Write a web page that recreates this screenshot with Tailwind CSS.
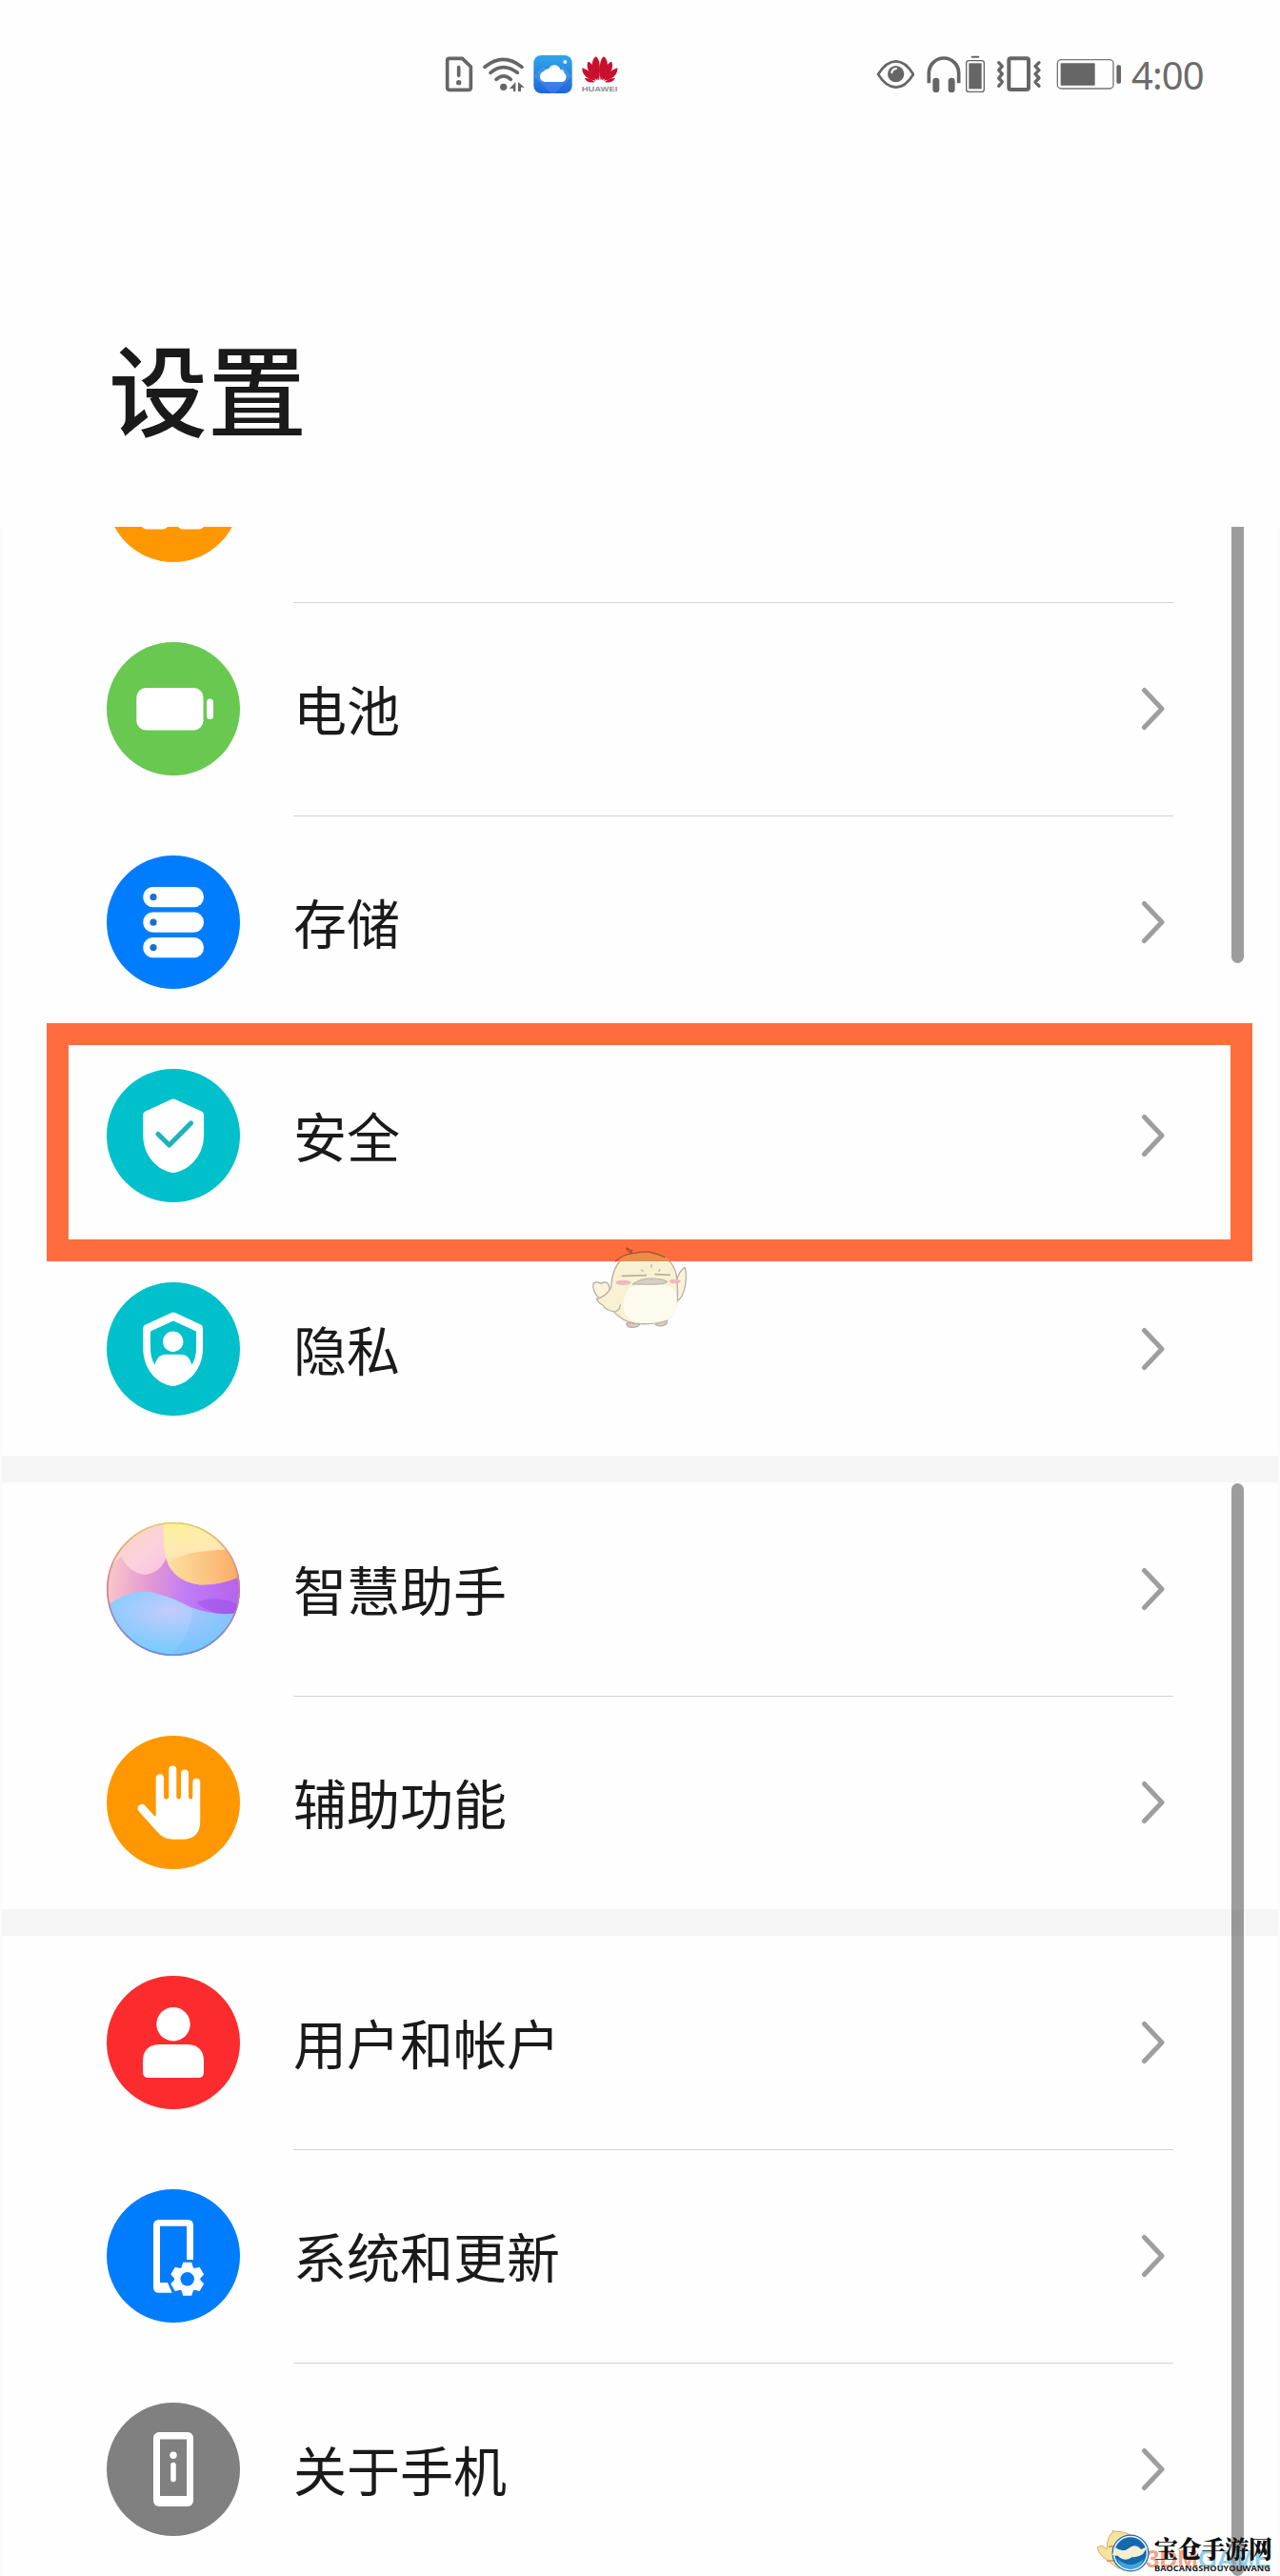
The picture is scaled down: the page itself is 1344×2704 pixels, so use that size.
<!DOCTYPE html>
<html lang="zh-CN">
  <head>
    <meta charset="UTF-8" />
    <meta name="viewport" content="width=device-width, initial-scale=1.0" />
    <title>设置</title>
    <script src="https://cdn.jsdelivr.net/npm/@tailwindcss/browser@4"></script>
  </head>
  <body class="bg-[#fefefe] font-['Noto_Sans_CJK_SC',sans-serif] text-[#1a1a1a]">
    <svg class="hidden">
      <symbol id="chevron" viewBox="0 0 26 46">
        <path d="M3.5 3.5 22 23 3.5 42.5" fill="none" stroke="#9e9e9e" stroke-width="5" stroke-linecap="round" stroke-linejoin="round" />
      </symbol>
    </svg>

    <div class="relative w-[1344px] h-[2704px] overflow-hidden">
      <!-- Header -->
      <header class="h-[553px]">
        <!-- Status bar -->
        <div class="flex items-center h-[156px] pl-[467px]">
          <svg class="w-[30px] h-10" viewBox="51 54 90 120">
            <path d="M66 64h40l27 26v66q0 7-7 7H66q-7 0-7-7V71q0-7 7-7Z" fill="none" stroke="#666" stroke-width="11" />
            <path d="M95 92v26" stroke="#666" stroke-width="11" stroke-linecap="round" />
            <circle cx="95" cy="140" r="8" fill="#666" />
          </svg>
          <svg class="w-11 h-10 ml-2.5" viewBox="171 54 132 120">
            <g fill="none" stroke="#666" stroke-width="11" stroke-linecap="round">
              <path d="M177 91Q235 43 294 91" />
              <path d="M195 109Q235 75 280 109" />
              <path d="M213 130Q237 109 259 130" />
            </g>
            <circle cx="236" cy="154" r="11" fill="#666" />
            <path d="M274 138v30h-7v-9h-12ZM282 138l20 17h-11v13h-9Z" fill="#666" />
          </svg>
          <svg class="w-[41px] h-10 ml-[9px]" viewBox="329 54 123 120">
            <defs>
              <linearGradient id="cloudBg" x1="0" y1="0" x2="0" y2="1">
                <stop offset="0" stop-color="#2fa6ea" />
                <stop offset="1" stop-color="#1f66dd" />
              </linearGradient>
            </defs>
            <rect x="330" y="54" width="121" height="120" rx="24" fill="url(#cloudBg)" />
            <path d="m331 120 30-30 30 30-30 30ZM391 120l30-30 30 30-30 30ZM361 150l30-26 30 26-24 24h-12Z" fill="#fff" opacity=".1" />
            <circle cx="429" cy="75" r="6" fill="#e4f6ff" />
            <path d="M364 138a17 17 0 0 1-2-33 15 15 0 0 1 15-8c8-16 31-17 37 2 10 0 11 5 11 10 12 6 9 28-5 29Z" fill="#fff" />
            <path d="M413 102q8-3 12 7" fill="none" stroke="#cfe9fb" stroke-width="4" />
          </svg>
          <svg class="w-10 h-10 ml-[9px]" viewBox="482 54 120 120">
            <g fill="#c8102e">
              <path d="M539 133C516 108 509 72 529 58c13 7 16 40 10 75Z" />
              <path d="M544 133C567 108 574 72 554 58c-13 7-16 40-10 75Z" />
              <path d="M535 133C515 124 495 97 504 74c17 4 28 33 31 59Z" />
              <path d="M548 133C568 124 588 97 579 74c-17 4-28 33-31 59Z" />
              <path d="M529 134C507 133 484 117 486 94c21 6 34 22 43 40Z" />
              <path d="M554 134c22-1 45-17 43-40-21 6-34 22-43 40Z" />
              <path d="M526 138c-12 4-27 1-33-12 13 0 25 5 33 12ZM557 138c12 4 27 1 33-12-13 0-25 5-33 12Z" />
            </g>
            <text x="484" y="168" textLength="113" lengthAdjust="spacingAndGlyphs" font-family="Liberation Sans" font-size="24" font-weight="700" fill="#8f8f8f">HUAWEI</text>
          </svg>

          <svg class="w-10 h-10 ml-[270px]" viewBox="60 54 120 120">
            <path d="M66 114Q92 73 122 73t55 41Q152 155 122 155T66 114Z" fill="none" stroke="#666" stroke-width="8" stroke-linejoin="round" />
            <circle cx="122" cy="113" r="26" fill="#666" />
            <path d="M109 109q1-11 14-13" fill="none" stroke="#fff" stroke-width="6" stroke-linecap="round" />
          </svg>
          <svg class="w-9 h-10 ml-[13px]" viewBox="218 54 108 120">
            <path d="M225 142v-32a46 46 0 0 1 94 0v32" fill="none" stroke="#666" stroke-width="11" />
            <rect x="237" y="125" width="21" height="46" rx="10" fill="#666" />
            <rect x="286" y="125" width="21" height="46" rx="10" fill="#666" />
          </svg>
          <svg class="w-5 h-10 ml-[5px]" viewBox="342 54 60 120">
            <path d="M362 59h20" stroke="#666" stroke-width="6" stroke-linecap="round" />
            <rect x="344" y="71" width="56" height="98" rx="8" fill="none" stroke="#666" stroke-width="4" />
            <rect x="352" y="79" width="40" height="81" fill="#666" />
          </svg>
          <svg class="w-12 h-10 ml-3" viewBox="438 54 144 120">
            <g fill="none" stroke="#666" stroke-width="10" stroke-linecap="round" stroke-linejoin="round">
              <rect x="478" y="64" width="62" height="98" rx="6" stroke-width="12" />
              <path d="m446 77 11 12-11 12 11 12-11 13 11 12-11 13M573 77l-12 12 12 12-12 12 12 13-12 12 12 13" />
            </g>
          </svg>
          <svg class="w-[68px] h-10 ml-[15px]" viewBox="627 54 204 120">
            <rect x="631" y="68" width="176" height="91" rx="12" fill="none" stroke="#777" stroke-width="4" />
            <rect x="641" y="79" width="108" height="70" rx="3" fill="#666" />
            <rect x="817" y="85" width="14" height="58" rx="5" fill="#666" />
          </svg>
          <span class="ml-[11px] mt-0.5 font-['Noto_Sans'] text-[40px] leading-none tracking-[-0.9px] text-[#6b6b6b]">4:00</span>
        </div>

        <h1 class="mt-[172px] ml-[114px] text-[104px] leading-[156px] font-medium">设置</h1>
      </header>

      <!-- Settings list -->
      <main class="border-x-2 border-[#fbfbfb]">
        <section>
          <div class="h-[79px] overflow-hidden flex items-end pl-[110px]">
            <svg class="size-[140px] mb-[42px]" viewBox="0 0 140 140">
              <circle cx="70" cy="70" r="70" fill="#ff9800" />
              <rect x="36" y="76" width="29" height="29.5" rx="6" fill="#fff" />
              <rect x="74" y="76" width="29" height="29.5" rx="6" fill="#fff" />
            </svg>
          </div>

          <div class="h-56 flex items-center px-[110px]">
            <svg class="size-[140px] shrink-0" viewBox="0 0 140 140">
              <circle cx="70" cy="70" r="70" fill="#68c850" />
              <rect x="31.3" y="48" width="70.2" height="44.5" rx="10" fill="#fff" />
              <rect x="105" y="59.5" width="7" height="21.5" rx="3.5" fill="#fff" />
            </svg>
            <div class="flex-1 h-full ml-14 border-t border-[#d2d2d2] flex items-center justify-between">
              <span class="-mt-[3px] text-[56px]">电池</span>
              <svg class="w-[26px] h-[46px] mr-2 -mt-px"><use href="#chevron" /></svg>
            </div>
          </div>

          <div class="h-56 flex items-center px-[110px]">
            <svg class="size-[140px] shrink-0" viewBox="0 0 140 140">
              <circle cx="70" cy="70" r="70" fill="#007dff" />
              <g fill="#fff">
                <rect x="38.3" y="33" width="63.7" height="21.3" rx="10.6" />
                <rect x="38.3" y="59.5" width="63.7" height="21.3" rx="10.6" />
                <rect x="38.3" y="86" width="63.7" height="21.3" rx="10.6" />
              </g>
              <g fill="#1a6fd0">
                <circle cx="49" cy="43.7" r="3.6" />
                <circle cx="49" cy="70.2" r="3.6" />
                <circle cx="49" cy="96.6" r="3.6" />
              </g>
            </svg>
            <div class="flex-1 h-full ml-14 border-t border-[#d2d2d2] flex items-center justify-between">
              <span class="-mt-[3px] text-[56px]">存储</span>
              <svg class="w-[26px] h-[46px] mr-2 -mt-px"><use href="#chevron" /></svg>
            </div>
          </div>

          <div class="h-56 flex items-center px-[110px]">
            <svg class="size-[140px] shrink-0" viewBox="0 0 140 140">
              <circle cx="70" cy="70" r="70" fill="#00c0cb" />
              <path d="M68.5 31.8q1.5-.7 3 0L100 44.8q2 1 2 3.2v22c0 19-13 35-29 38.5q-3 1-6 0C51 105 38.3 89 38.3 70V48q0-2.200 2-3.200Z" fill="#fff" />
              <path d="m54 68.500 11.700 11.500L88.500 57" fill="none" stroke="#1fb2bb" stroke-width="5.200" stroke-linecap="round" stroke-linejoin="round" />
            </svg>
            <div class="flex-1 h-full ml-14 flex items-center justify-between">
              <span class="-mt-0.5 text-[56px]">安全</span>
              <svg class="w-[26px] h-[46px] mr-2"><use href="#chevron" /></svg>
            </div>
          </div>

          <div class="h-56 flex items-center px-[110px]">
            <svg class="size-[140px] shrink-0" viewBox="0 0 140 140">
              <circle cx="70" cy="70" r="70" fill="#00c0cb" />
              <path d="M68.5 31.8q1.5-.7 3 0L99.5 44.8q1.5 1 1.5 3.2v22c0 19-12.500 35-28.500 38.500q-3 1-6 0C50.500 105 38.300 89 38.300 70V48q0-2.200 2-3.200Z" fill="#fff" />
              <path d="M70 40.500 94 51.500V70q0 9-4.500 16.500C87 79 84 75.700 78 75.700H62c-6 0-9 3.300-11.500 10.800Q46 79 46 70V51.500Z" fill="#00c0cb" />
              <circle cx="69.700" cy="62.300" r="10.700" fill="#fff" />
            </svg>
            <div class="flex-1 h-full ml-14 flex items-center justify-between">
              <span class="-mt-0.5 text-[56px]">隐私</span>
              <svg class="w-[26px] h-[46px] mr-2"><use href="#chevron" /></svg>
            </div>
          </div>
        </section>

        <section class="border-t-28 border-[#f6f6f6]">
          <div class="h-56 flex items-center px-[110px]">
            <svg class="size-[140px] shrink-0" viewBox="0 0 140 140">
              <defs>
                <clipPath id="orb"><circle cx="70" cy="70" r="70" /></clipPath>
                <linearGradient id="orbMid" x1="0" y1="0" x2="1" y2=".1">
                  <stop offset="0" stop-color="#fbd0c8" />
                  <stop offset=".35" stop-color="#e69ad0" />
                  <stop offset=".65" stop-color="#c07bf8" />
                  <stop offset="1" stop-color="#b765ee" />
                </linearGradient>
                <linearGradient id="orbPink" x1="0" y1="0" x2="1" y2="1">
                  <stop offset="0" stop-color="#fcd3b8" />
                  <stop offset=".6" stop-color="#fbd3dc" />
                  <stop offset="1" stop-color="#f8c0e0" />
                </linearGradient>
                <linearGradient id="orbYellow" x1="0" y1="0" x2=".2" y2="1">
                  <stop offset="0" stop-color="#fdf19a" />
                  <stop offset=".5" stop-color="#fee9b4" />
                  <stop offset="1" stop-color="#fcc090" />
                </linearGradient>
                <linearGradient id="orbOrange" x1="0" y1="0" x2="1" y2="0">
                  <stop offset="0" stop-color="#fee0a0" />
                  <stop offset="1" stop-color="#fbab66" />
                </linearGradient>
                <radialGradient id="orbBlue" cx=".48" cy=".3" r=".6">
                  <stop offset="0" stop-color="#c3ccfc" />
                  <stop offset="1" stop-color="#7ccbff" />
                </radialGradient>
                <linearGradient id="orbRim" x1="0" y1="0" x2="0" y2="1">
                  <stop offset="0" stop-color="#e3cc62" />
                  <stop offset=".5" stop-color="#d07a98" />
                  <stop offset="1" stop-color="#6d8ade" />
                </linearGradient>
              </defs>
              <g clip-path="url(#orb)">
                <rect width="140" height="140" fill="url(#orbMid)" />
                <path d="M0 0h64v30q-3 22-24 25-16-2-25-19L0 50Z" fill="url(#orbPink)" />
                <path d="M60 0h80v56q-18 10-42 9.500Q63 62 60 25Z" fill="url(#orbYellow)" />
                <path d="M64 43q22-16 76-14v28q-20 9-42 8.500Q75 62 64 43Z" fill="url(#orbOrange)" />
                <path d="M94 84q22-9 46 3v10q-28 2-46-13Z" fill="#9550ea" opacity=".55" />
                <path d="M0 88q25-20 50-14 20 5 38 15 26 10 52 6v45H0Z" fill="url(#orbBlue)" />
                <path d="M90 90q-2 32-24 50h74V95q-28 5-50-5Z" fill="#6aaefb" opacity=".2" />
              </g>
              <circle cx="70" cy="70" r="69.200" fill="none" stroke="url(#orbRim)" stroke-width="1.600" />
            </svg>
            <div class="flex-1 h-full ml-14 flex items-center justify-between">
              <span class="-mt-0.5 text-[56px]">智慧助手</span>
              <svg class="w-[26px] h-[46px] mr-2"><use href="#chevron" /></svg>
            </div>
          </div>

          <div class="h-56 flex items-center px-[110px]">
            <svg class="size-[140px] shrink-0" viewBox="0 0 140 140">
              <circle cx="70" cy="70" r="70" fill="#ff9800" />
              <path d="M51.700 84V44.500a4.150 4.150 0 0 1 8.300 0V64q0 2.500 2.650 2.500T65.300 64V35.500a4 4 0 0 1 8 0V64q0 2.500 2.350 2.500T78 64V39.500a4 4 0 0 1 8 0V64q0 2.500 2.200 2.500T90.300 64V48a4 4 0 0 1 7.900 0V90q0 18.700-19 18.700H70q-10.500 0-17-8L33.500 79a4.500 4.500 0 0 1 6-6.500L49.500 83.500Q51.500 85.500 51.700 84Z" fill="#fff" />
            </svg>
            <div class="flex-1 h-full ml-14 border-t border-[#d2d2d2] flex items-center justify-between">
              <span class="-mt-[3px] text-[56px]">辅助功能</span>
              <svg class="w-[26px] h-[46px] mr-2 -mt-px"><use href="#chevron" /></svg>
            </div>
          </div>
        </section>

        <section class="border-t-28 border-[#f6f6f6]">
          <div class="h-56 flex items-center px-[110px]">
            <svg class="size-[140px] shrink-0" viewBox="0 0 140 140">
              <circle cx="70" cy="70" r="70" fill="#fc2c2e" />
              <circle cx="70" cy="50.700" r="17.700" fill="#fff" />
              <path d="M54.500 72h31Q102 73 102 90v11q0 6-6 6H44q-6 0-6-6V90Q38 73 54.500 72Z" fill="#fff" />
            </svg>
            <div class="flex-1 h-full ml-14 flex items-center justify-between">
              <span class="-mt-0.5 text-[56px]">用户和帐户</span>
              <svg class="w-[26px] h-[46px] mr-2"><use href="#chevron" /></svg>
            </div>
          </div>

          <div class="h-56 flex items-center px-[110px]">
            <svg class="size-[140px] shrink-0" viewBox="0 0 140 140">
              <circle cx="70" cy="70" r="70" fill="#007dff" />
              <path d="M91 74V38q0-6-6-6H55q-6 0-6 6v64.700q0 6 6 6h13.700L64 98h-8V38.700h28V74Z" fill="#fff" />
              <g transform="translate(84.700 94.300)">
                <g fill="#fff">
                  <circle r="13.500" />
                  <path id="tooth" d="M-6.500-11-4.500-17.500h9l2 6.500Z" />
                  <use href="#tooth" transform="rotate(60)" />
                  <use href="#tooth" transform="rotate(120)" />
                  <use href="#tooth" transform="rotate(180)" />
                  <use href="#tooth" transform="rotate(240)" />
                  <use href="#tooth" transform="rotate(300)" />
                </g>
                <circle r="7.200" fill="#007dff" />
              </g>
            </svg>
            <div class="flex-1 h-full ml-14 border-t border-[#d2d2d2] flex items-center justify-between">
              <span class="-mt-[3px] text-[56px]">系统和更新</span>
              <svg class="w-[26px] h-[46px] mr-2 -mt-px"><use href="#chevron" /></svg>
            </div>
          </div>

          <div class="h-56 flex items-center px-[110px]">
            <svg class="size-[140px] shrink-0" viewBox="0 0 140 140">
              <circle cx="70" cy="70" r="70" fill="#808080" />
              <rect x="49" y="31" width="42" height="78" rx="6" fill="#fff" />
              <rect x="56" y="38.500" width="28" height="59.500" fill="#808080" />
              <circle cx="70" cy="55.300" r="3.700" fill="#fff" />
              <path d="M70 65.500v15" stroke="#fff" stroke-width="5.600" stroke-linecap="round" />
            </svg>
            <div class="flex-1 h-full ml-14 border-t border-[#d2d2d2] flex items-center justify-between">
              <span class="-mt-[3px] text-[56px]">关于手机</span>
              <svg class="w-[26px] h-[46px] mr-2 -mt-px"><use href="#chevron" /></svg>
            </div>
          </div>
        </section>
      </main>

      <!-- Scrollbars -->
      <div class="absolute left-[1293px] top-[553px] w-[13px] h-[458px] rounded-b-full bg-black/38"></div>
      <div class="absolute left-[1293px] top-[1557px] w-[13px] h-[1147px] rounded-full bg-black/38"></div>

      <!-- Highlight frame -->
      <div class="absolute left-[49px] top-[1074px] w-[1266px] h-[250px] border-23 border-[#ff6d3f]"></div>

      <!-- Mascot -->
      <svg class="absolute left-[600px] top-[1280px] w-[140px] h-[130px]" viewBox="0 0 420 390">
        <g stroke="#b8b0a8" stroke-width="4" stroke-linejoin="round" stroke-linecap="round">
          <path d="M174 326q-4 14 20 14 22-2 20-12ZM264 330q8 8 26 4 14-4 11-18Z" fill="#d8cec0" />
          <path d="M331 196q6-32 26-45 8 20 1 60-8 36-24 45Z" fill="#faf5da" />
          <path d="M88 250q-24-28-19-48 10-8 24 0 14-8 22 0 8 14 6 30Z" fill="#faf5da" />
          <path d="M194 108q50-14 102 14 36 22 37 78 8 80-24 110-38 24-106 18-40-4-70-38-26-4-34-20-14-6-20-20 30-6 46-36 4-90 69-106Z" fill="#f8f2d2" />
        </g>
        <path d="M146 132q16-20 48-25 50-14 102 14l15 11Z" fill="#ee8a48" />
        <path d="M139 132q22-22 55-25 50-14 100 12M194 107q-18-4-22-18 8 10 20 8M194 107l-16-16" fill="none" stroke="#b4522c" stroke-width="4" stroke-linecap="round" />
        <path d="M186 212q60-18 130 0 18 20 17 54-2 30-26 48-50 20-112 8-32-18-32-54 2-34 23-56Z" fill="#fdfbee" />
        <g fill="none" stroke="#b8b0a8" stroke-width="5" stroke-linecap="round">
          <path d="m160 178 75-2M264 173l46 2" />
          <path d="m221 159 4 5M252 143v8M279 158l-4 5M154 270q-2 16-16 20" stroke-width="4" />
        </g>
        <path d="M192 204q24-18 60-18t50 10q-4 8-48 9Z" fill="#d8cec2" stroke="#b8b0a8" stroke-width="3" />
        <ellipse cx="163" cy="199" rx="24" ry="8" fill="#efb9bd" />
        <ellipse cx="326" cy="195" rx="18" ry="7" fill="#efb9bd" />
      </svg>

      <!-- Site watermark -->
      <div class="absolute left-[1150px] top-[2650px] w-[194px] h-[54px]">
        <svg class="size-full" viewBox="0 0 194 54">
          <path d="M19 8q-2-3 1-1 16 0 24 10L38 44l-14 2-12-9q-7-4-10-13 6-4 10 2Q13 10 19 8Z" fill="#f7e2a0" stroke="#d6ae62" />
          <path d="M14 23h10M12 38h8" stroke="#e59a72" stroke-width="2" />
          <text x="53" y="45" textLength="55" lengthAdjust="spacingAndGlyphs" font-family="Liberation Sans" font-size="25" font-weight="700" fill="#f0a58a">3DM</text>
          <text x="108" y="45" textLength="76" lengthAdjust="spacingAndGlyphs" font-family="Liberation Sans" font-size="25" font-weight="700" fill="#93cfe4">GAME</text>
          <circle cx="37" cy="30" r="19.500" fill="#1568ae" />
          <circle cx="37" cy="30" r="17.500" fill="none" stroke="#e7f3fa" stroke-width="1.500" />
          <path d="M21 24q8 6 14 1 7-6 13 1l7-3-5 8q-6 4-11 3-8 6-15-1l-6-1Z" fill="#f3efd0" />
          <path d="M23 36q14 12 28 0-4 11-14 11T23 36Z" fill="#42a6dc" />
          <text x="62" y="35" textLength="124" font-family="Noto Serif CJK SC, Noto Sans CJK SC" font-size="25" font-weight="900" fill="#111">宝仓手游网</text>
          <text x="62" y="48.500" textLength="122" lengthAdjust="spacingAndGlyphs" font-family="Open Sans" font-size="8.500" font-weight="700" fill="#222">BAOCANGSHOUYOUWANG</text>
        </svg>
      </div>
    </div>
  </body>
</html>
